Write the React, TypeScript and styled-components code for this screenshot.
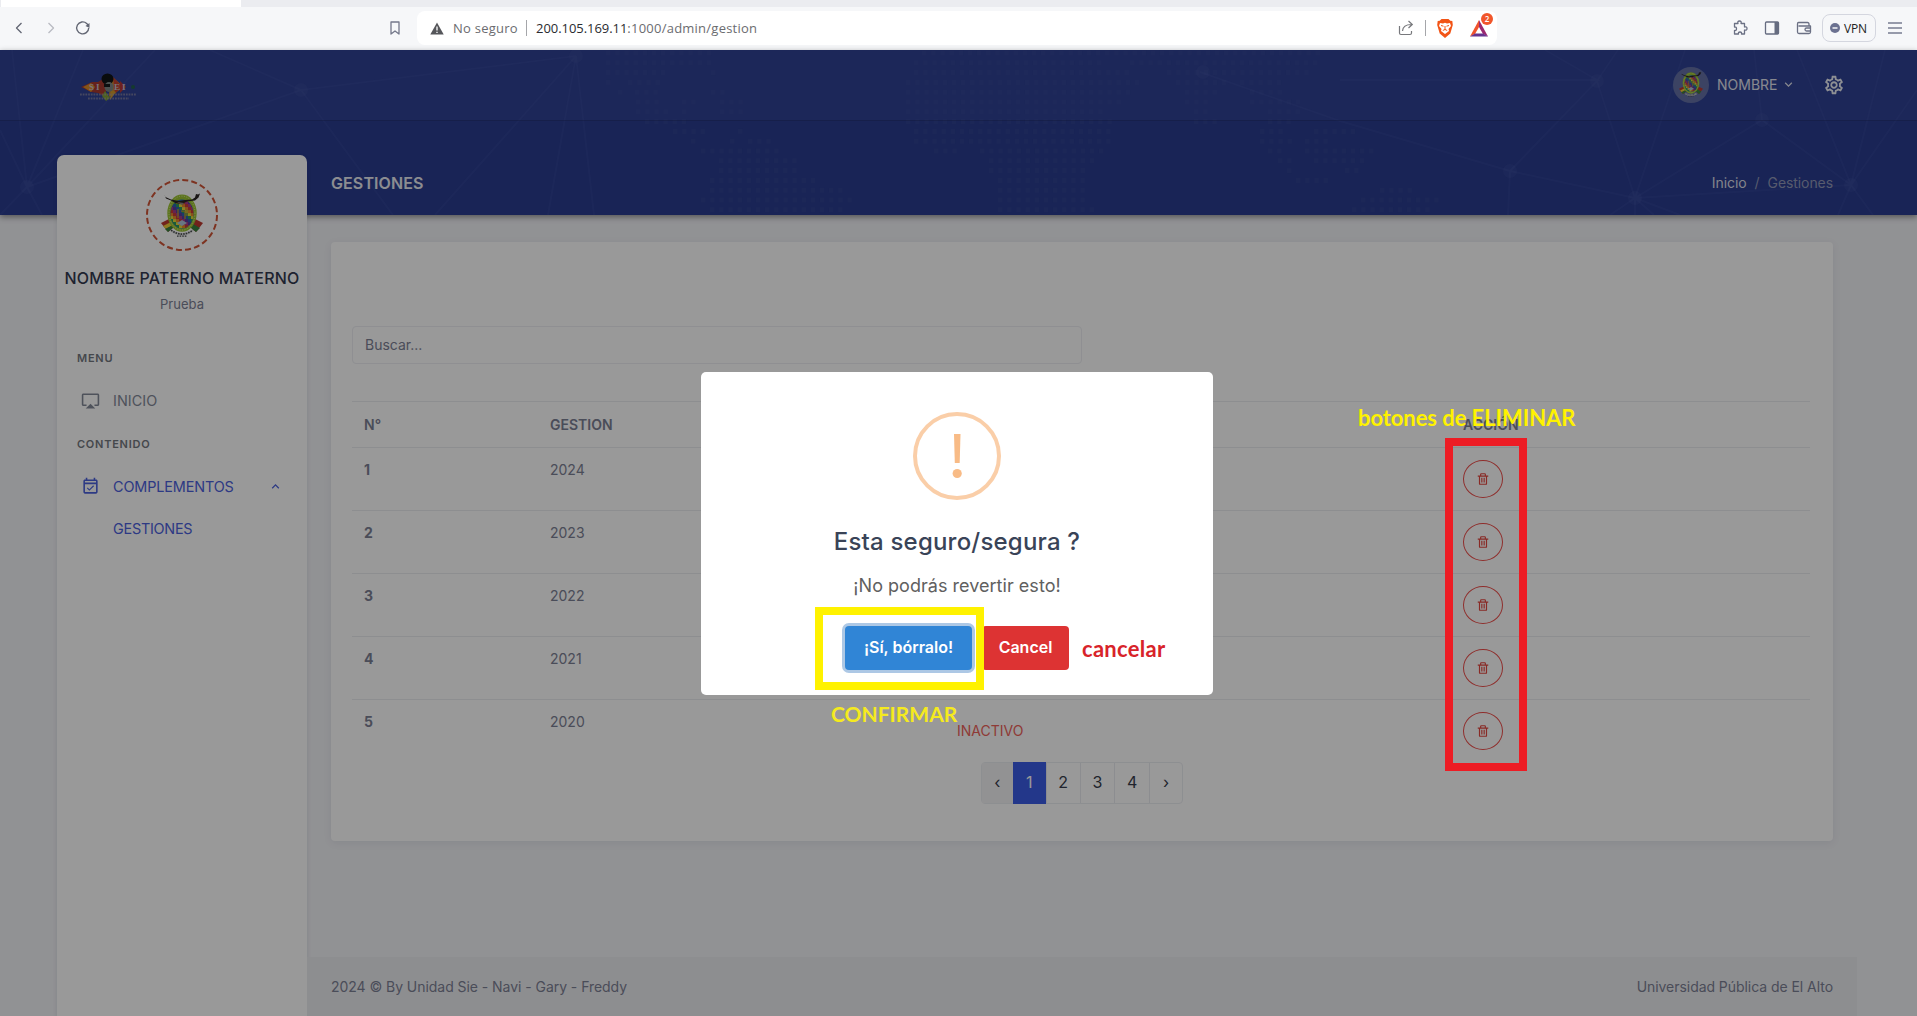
import React from 'react';
import styled, { createGlobalStyle } from 'styled-components';
import { MdOutlineAirplay, MdOutlineEventAvailable, MdOutlineSettings, MdKeyboardArrowDown, MdKeyboardArrowUp } from 'react-icons/md';
import { BiTrash } from 'react-icons/bi';

const GlobalStyle = createGlobalStyle`
  * { box-sizing: border-box; }
  body { margin: 0; overflow: hidden; font-family: Inter, "Liberation Sans", sans-serif; font-size: 14px; color: #7c8094; }
`;

/* ---------- browser chrome ---------- */
const Screen = styled.div`width: 1917px; height: 1016px; position: relative; overflow: hidden;`;
const TabStrip = styled.div`height: 7px; background: #ebecf0; padding-left: 1px;`;
const ActiveTab = styled.div`width: 240px; height: 7px; background: #fff;`;
const Toolbar = styled.div`
  height: 43px; background: #f6f7f9; display: flex; align-items: center; padding-left: 11px;
  padding-bottom: 1px; font-family: "Open Sans", "Noto Sans", sans-serif;
  svg { display: block; flex: none; }
`;
const NavIcons = styled.div`display: flex; flex: none; gap: 16px; width: 376px;`;
const Address = styled.div`
  flex: none; width: 1080px; height: 34px; margin-left: 14px; background: #fff; border-radius: 8px;
  padding: 0 9px 0 13px; display: flex; align-items: center; font-size: 13px; color: #6b6c70; white-space: nowrap;
`;
const Host = styled.span`color: #2a2b2f; letter-spacing: -0.05px;`;
const Path = styled.span`letter-spacing: 0.24px; flex: 1;`;
const Insecure = styled.span`margin-left: 9px; width: 73px; letter-spacing: 0.25px;`;
const Rule = styled.i<{ $gap: number }>`width: 1px; height: 16px; background: #a5a6aa; margin-right: ${p => p.$gap}px;`;
const Tools = styled.div`flex: none; margin-left: 235px; display: flex; align-items: center; gap: 16px;`;
const Vpn = styled.div`
  width: 54px; height: 28px; margin: 0 -5px 0 -6px; border: 1px solid #d4d6df; border-radius: 8px; display: flex; align-items: center;
  gap: 4px; padding-left: 7px; font-size: 12px; letter-spacing: -0.2px; color: #222;
`;
const ShareGap = styled.span`margin-right: 11px;`;
const Rewards = styled.div`position: relative; margin-left: 17px;`;
const Count = styled.b`
  position: absolute; left: 11px; top: -7px; width: 12px; height: 12px; border-radius: 50%; background: #f1562b; color: #fff;
  font-size: 8px; line-height: 12px; text-align: center; font-weight: 600;
`;

/* ---------- page ---------- */
const Page = styled.div`height: 966px; position: relative; background: #f2f3f7;`;
const Backdrop = styled.div`
  position: absolute; left: 0; top: 0; width: 100%; height: 165px; background: #2a3c8f; box-shadow: 0 2px 6px rgba(0,0,0,.42);
  svg { display: block; }
`;
const TopBar = styled.header`
  position: relative; height: 71px; padding: 0 72px 1px 80px; display: flex; align-items: center;
  background: rgba(70,88,170,.18); border-bottom: 1px solid rgba(20,30,80,.35);
`;
const LogoBox = styled.div`flex: 1; padding-top: 9px;`;
const User = styled.div`display: flex; align-items: center; color: #e1e3ee; font-size: 14px;`;
const UserPhoto = styled.div`
  width: 36px; height: 36px; border-radius: 50%; background: #6471a6; display: flex; align-items: center; justify-content: center; margin-right: 8px;
`;
const UserName = styled.span`width: 64px; padding-bottom: 1px;`;
const Gear = styled(MdOutlineSettings)`margin-left: 27px; color: #eceef6;`;
const Layout = styled.div`position: relative; height: 895px; display: flex; padding: 0 60px 0 57px;`;
const Sidebar = styled.aside`
  width: 250px; margin-top: 34px; background: #fff; border-radius: 7px 7px 0 0; box-shadow: 0 2px 5px rgba(15,34,58,.1);
  display: flex; flex-direction: column;
`;
const Profile = styled.div`display: flex; flex-direction: column; align-items: center; padding-top: 23px; height: 186px; white-space: nowrap;`;
const FullName = styled.h5`margin: 16px 0 0; font-size: 16px; line-height: 20px; font-weight: 450; color: #343a50; letter-spacing: 0.16px;`;
const Role = styled.p`margin: 8px 0 0; font-size: 13px; line-height: 16px; letter-spacing: .05px;`;
const MenuTitle = styled.div`height: 34px; padding: 11px 20px 0; font-size: 11px; line-height: 12px; font-weight: 600; letter-spacing: .75px; color: #74787f;`;
const MenuItem = styled.a<{ $active?: boolean }>`
  height: 52px; padding: 0 24px 1px 24px; display: flex; align-items: center; color: ${p => (p.$active ? '#4c61dc' : '#838998')};
  font-size: 14.4px; letter-spacing: ${p => (p.$active ? '-.12px' : '0.05px')};
  svg { flex: none; }
`;
const MenuText = styled.span`margin-left: 13px; flex: 1;`;
const SubItem = styled.a`height: 30px; padding-left: 56px; line-height: 31px; font-size: 14.4px; letter-spacing: -.24px; color: #4c61dc;`;
const Main = styled.main`flex: 1; display: flex; flex-direction: column;`;
const TitleRow = styled.div`height: 94px; padding: 29px 24px 0; display: flex; align-items: center; justify-content: space-between;`;
const Title = styled.h4`margin: 0; font-size: 16px; font-weight: 600; color: #e9ebf2; letter-spacing: .1px;`;
const Crumbs = styled.div`display: flex; gap: 8px; font-size: 14px; letter-spacing: -.08px; color: #9198b8; span:first-child { color: #dadce7; }`;
const Card = styled.section`
  margin: 27px 24px 0; height: 599px; background: #fff; border-radius: 4px; padding: 84px 21px 0; box-shadow: 0 2px 8px rgba(15,34,58,.07);
`;
const Search = styled.div`
  width: 730px; height: 38px; border: 1px solid #eeeff3; border-radius: 4px; padding-left: 12px; line-height: 36px; font-size: 14px;
`;
const Table = styled.table`width: 1458px; margin-top: 37px; table-layout: fixed; border-collapse: separate; border-spacing: 0;`;
const Th = styled.th`border-top: 1px solid #ecedf1; height: 46px; padding: 0 12px 1px; text-align: left; font-size: 14px; font-weight: 600; line-height: 21px;`;
const Td = styled.td<{ $strong?: boolean }>`
  border-top: 1px solid #ecedf1; height: 63px; padding: 11px 12px; vertical-align: top; line-height: 21px; font-size: 14px;
  font-weight: ${p => (p.$strong ? 700 : 400)};
`;
const Status = styled.span`display: block; padding: 10px 0 0; color: #ee625a; font-size: 14px; line-height: 20px;`;
const Round = styled.button`
  width: 40px; height: 38px; margin-top: 1px; padding: 0 0 1px; border: 1px solid #ee4d4a; border-radius: 50%; background: none; color: #e4463f;
  display: flex; align-items: center; justify-content: center;
`;
const Pager = styled.nav`display: flex; width: 202px; height: 42px; margin: 0 auto; border: 1px solid #eceef2; border-radius: 4px;`;
const PageLink = styled.a<{ $active?: boolean; $muted?: boolean; $w: number }>`
  width: ${p => p.$w}px; margin: ${p => (p.$active ? '-1px 0' : '0')}; padding-bottom: 2px;
  border-left: ${p => (p.$active || p.$w < 33 ? 0 : 1)}px solid #e9ebf0;
  background: ${p => (p.$active ? '#3b5de7' : p.$muted ? '#f4f4f6' : 'transparent')};
  color: ${p => (p.$active ? '#fff' : '#383d4c')}; font-size: 16px; display: flex; align-items: center; justify-content: center;
`;
const Footer = styled.footer`
  margin-top: auto; height: 59px; padding: 0 24px; display: flex; align-items: center; justify-content: space-between;
  background: #ecedf1; font-size: 14px; letter-spacing: -.05px;
`;

/* ---------- modal ---------- */
const Shade = styled.div`
  position: absolute; left: 0; top: 50px; width: 1917px; height: 966px; background: rgba(0,0,0,.4);
  display: flex; justify-content: center; align-items: flex-start; padding: 322px 3px 0 0;
`;
const Dialog = styled.div`width: 512px; height: 323px; background: #fff; border-radius: 5px; display: flex; flex-direction: column; align-items: center; padding-top: 40px;`;
const DialogTitle = styled.h2`margin: 27px 0 0; font-size: 24px; line-height: 30px; font-weight: 450; color: #394357; letter-spacing: .2px;`;
const DialogText = styled.p`margin: 17px 0 0; font-size: 18px; line-height: 24px; color: #606060; letter-spacing: .03px;`;
const Actions = styled.div`display: flex; gap: 10px; margin: 28px 0 0;`;
const Action = styled.button<{ $color: string; $w: number; $focus?: boolean }>`
  width: ${p => p.$w}px; height: 44px; padding: 0 0 2px; border: 0; border-radius: 4px; background: ${p => p.$color}; color: #fff;
  font: 600 16px Inter, sans-serif; letter-spacing: 0; box-shadow: ${p => (p.$focus ? '0 0 0 3px #adc8e5' : 'none')};
`;

/* ---------- annotations drawn over the screen ---------- */
const Frame = styled.div<{ $x: number; $y: number; $w: number; $h: number; $c: string }>`
  position: absolute; left: ${p => p.$x}px; top: ${p => p.$y}px; width: ${p => p.$w}px; height: ${p => p.$h}px; border: 8px solid ${p => p.$c};
`;
const Note = styled.div<{ $x: number; $y: number; $c: string; $size: number; $ls?: number }>`
  position: absolute; left: ${p => p.$x}px; top: ${p => p.$y}px; color: ${p => p.$c}; font: 700 ${p => p.$size}px/28px Lato, sans-serif;
  letter-spacing: ${p => p.$ls || 0}px; white-space: nowrap;
`;

function Crest({ size }: { size: number }) {
  const colors = ['#2f5fb0', '#2a9a5a', '#e6d83a', '#e9862c', '#cc3b34', '#a93a86', '#5b3d9a'];
  const cells: React.ReactElement[] = [];
  for (let r = 0; r < 9; r++) for (let c = 0; c < 8; c++)
    cells.push(<rect key={`${r}-${c}`} x={9 + c * 3} y={9 + r * 3} width="3.1" height="3.1" fill={colors[(c + 14 - r) % 7]} />);
  return (
    <svg width={size} height={size * 1.1} viewBox="0 0 42 46">
      <path d="M0 31l8-4 5 8-6 5z" fill="#bd3930" /><path d="M2 34l8-4 2 3-7 4z" fill="#eecd37" /><path d="M4 37l8-4 1 2-6 5z" fill="#37833e" />
      <path d="M42 31l-8-4-5 8 6 5z" fill="#bd3930" /><path d="M39 36l-7-4-3 3 6 5z" fill="#37833e" />
      <ellipse cx="21" cy="21" rx="14.700" ry="18.700" fill="#9cc432" />
      <ellipse cx="21" cy="21" rx="13" ry="17" fill="none" stroke="#dbe8a0" strokeDasharray="1 1.500" />
      <clipPath id={`crest${size}`}><ellipse cx="21" cy="22" rx="11.500" ry="14.500" /></clipPath>
      <g clipPath={`url(#crest${size})`}><rect x="8" y="6" width="26" height="32" fill="#286eb3" />{cells}
        <path d="M17 17v9M20 19h4v8M26 17v7" stroke="#b99a32" fill="none" strokeWidth="1.300" /><path d="M16 31l5-3 5 3-5 3z" fill="#aec7dc" /></g>
      <path d="M3 2l1.500 3 5.500 2.500 8 1.500 6-1 7-.5 3-2 1-3.500 2 .5 2-1-1.500 4-3.500 3-8 1-5 2.500-6-.5-5-3-5-2z" fill="#2b2624" />
      <path d="M16 10l7 1-2 2z" fill="#8d8580" />
      <path d="M11 39q10 7 20 0" fill="none" stroke="#e8e8e8" strokeWidth="2.500" /><path d="M10 38q11 8 22 0" fill="none" stroke="#45484c" strokeWidth="1.600" strokeDasharray="1.600 1" />
      <path d="M16 44h10" stroke="#45484c" strokeWidth="1.300" strokeDasharray="1.600 1" />
    </svg>
  );
}

function BannerArt() {
  const nodes = [[27, 137], [301, 40], [576, 6], [993, 22], [1597, 31], [1510, 121], [1635, 148], [1762, 70], [1851, 135]];
  const lines = ['M27 137L12 0M27 137L83 0M27 137L301 40L576 6M301 40L210 0M27 137L155 0M301 40L393 165M576 6L435 165M576 6L548 165M576 6L594 165M27 137L0 80M27 137L0 165M27 137L42 165',
    'M1200 22L1340 71L1510 121L1635 148L1851 135M1340 30H1597L1545 0M1597 31L1510 121L1508 165M1597 31L1635 148L1762 70L1851 135M1635 148L1685 0M1762 70L1754 0M1851 135L1797 0M1851 135L1885 0M1851 135L1838 165M1851 135L1873 165M1635 148L1610 165M1635 148V165M1635 148L1654 165M1635 148L1680 165M1851 135L1917 40M1597 31L1618 0'];
  // each run is [row, first x, dot count]
  const runs = [[0, 606, 12], [1, 606, 12], [2, 606, 7], [2, 711, 1], [3, 606, 1], [3, 628, 4], [4, 618, 1], [4, 635, 3], [4, 711, 2], [5, 636, 3], [5, 682, 2], [5, 720, 3], [6, 636, 4], [6, 682, 1], [6, 720, 3], [7, 645, 5], [8, 673, 4], [8, 738, 1], [9, 691, 1], [9, 730, 1], [9, 748, 3], [10, 701, 9], [11, 719, 9], [12, 719, 9], [13, 710, 12], [14, 710, 15], [15, 701, 17], [16, 710, 15],
    [0, 922, 44], [1, 914, 21], [1, 1130, 21], [2, 914, 24], [2, 1167, 16], [3, 906, 26], [3, 1176, 6], [3, 1240, 5], [4, 906, 25], [4, 1185, 4], [4, 1250, 4], [5, 906, 24], [5, 1185, 3], [5, 1250, 6], [6, 906, 22], [6, 1194, 2], [6, 1268, 4], [7, 906, 23], [7, 1194, 3], [7, 1268, 3], [8, 914, 22], [8, 1260, 3], [8, 1314, 5], [9, 914, 22], [9, 1260, 4], [9, 1305, 3], [10, 934, 3], [10, 980, 14], [10, 1268, 2], [10, 1305, 8], [11, 989, 12], [11, 1278, 2], [11, 1314, 6], [12, 989, 11], [12, 1287, 1], [12, 1345, 2], [13, 998, 10], [13, 1296, 4], [14, 998, 10], [14, 1380, 4], [15, 998, 10], [15, 1361, 9], [16, 998, 11], [16, 1352, 9]];
  return (
    <svg width="1917" height="165" viewBox="0 0 1917 165">
      {lines.map(d => <path key={d} d={d} stroke="#7286cf" strokeOpacity=".09" strokeWidth="2" fill="none" />)}
      {nodes.map(([x, y]) => <circle key={x} cx={x === 993 ? 1203 : x} cy={y} r="7" fill="#6377bd" fillOpacity=".12" />)}
      {runs.map(([r, x, n], i) => <path key={i} d={`M${x} ${3 + r * 9.8}h${n * 9.15 - 4}`} stroke="#6d80bd" strokeOpacity=".085" strokeWidth="5" strokeDasharray="4.500 4.650" />)}
    </svg>
  );
}

function Logo() {
  return (
    <svg width="57" height="29" viewBox="0 0 57 29">
      <path d="M1 14l11-5 6 0 8-5v20l-8-4-7-1z" fill="#a8392f" />
      <path d="M3 14l8-4 4 4-4 5z" fill="#dc8c28" /><path d="M30 2l14 12-15 10z" fill="#c98a30" /><path d="M33 4l9 9-7 8z" fill="#c3402e" /><path d="M40 8l6 6-6 6z" fill="#b63836" /><path d="M25 18l5 7-4 3-4-5z" fill="#7fa032" /><path d="M31 17l5 2-6 8z" fill="#d39b2c" />
      <circle cx="53" cy="14" r="2" fill="#23624c" />
      <ellipse cx="27.500" cy="6" rx="6" ry="5.500" fill="#101416" /><ellipse cx="29" cy="14" rx="4.500" ry="5" fill="#7e8886" /><path d="M24 11h6v3h-6z" fill="#15191b" />
      <text x="9" y="17" fontFamily="Liberation Serif" fontSize="9" fontWeight="700" letterSpacing="2" fill="#c8bfcc">SI</text><text x="34" y="17" fontFamily="Liberation Serif" fontSize="9" fontWeight="700" letterSpacing="2" fill="#c8bfcc">EI</text>
      <path d="M0 21.500h56M8 25.500h41" stroke="#a39ba8" strokeWidth="2" strokeDasharray="1.800 .9" opacity=".6" />
    </svg>
  );
}

const Line = ({ d, w = 16, c = '#626673', s = 1.3 }: { d: string; w?: number; c?: string; s?: number }) => (
  <svg width={w} height="16" viewBox={`0 0 ${w} 16`} fill="none" stroke={c} strokeWidth={s} strokeLinejoin="round"><path d={d} /></svg>
);

const rows = [
  { year: 2024 }, { year: 2023 }, { year: 2022 }, { year: 2021 }, { year: 2020, status: 'INACTIVO' },
];

export default function App() {
  return (
    <Screen>
      <GlobalStyle />
      <TabStrip><ActiveTab /></TabStrip>
      <Toolbar>
        <NavIcons>
          <Line d="M10.500 3L5.500 8l5 5" /><Line d="M5.500 3l5 5-5 5" c="#b9bbc2" />
          <svg width="16" height="16" viewBox="0 0 16 16" fill="none" stroke="#626673" strokeWidth="1.400"><path d="M13.700 8a6 6 0 1 1-2-4.600L13.700 6" /><path d="M14.500 3v5l-4-2z" fill="#626673" stroke="none" /></svg>
        </NavIcons>
        <Line d="M4 2h8v12l-4-3-4 3z" c="#74788a" />
        <Address>
          <svg width="14" height="13" viewBox="0 0 14 13"><path d="M7 .5L13.700 12.500H.3z" fill="#55565a" /><path d="M7 4.500v4M7 9.700v1.300" stroke="#fff" strokeWidth="1.300" /></svg>
          <Insecure>No seguro</Insecure><Rule $gap={9} />
          <Host>200.105.169.11</Host><Path>:1000/admin/gestion</Path>
          <ShareGap><svg width="16" height="16" viewBox="0 0 16 16" fill="none" stroke="#77787c" strokeWidth="1.200"><path d="M1.500 6v7q0 1.500 1.500 1.500h9q1.500 0 1.500-1.500v-2M4.500 11q.5-6.500 9-6.500M10.500 1l3.800 3.500-3.800 3.500" /></svg></ShareGap>
          <Rule $gap={11} />
          <svg width="16" height="19" viewBox="0 0 16 19"><path d="M4.500 0h7l1.800 1.800 2 .2.500 4-2.500 8.500L8 19l-5.300-4.500L.2 6l.5-4 2-.2z" fill="#f25416" /><path d="M3 4l3 .5 2-.7 2 .7 3-.5 1 3-2.500 3 .5 2L8 15l-4-3 .5-2L2 7z" fill="#fff" /><path d="M4 6.500l2.500.7M12 6.500l-2.500.7M8 7v4M5.800 11.500L8 10.500l2.200 1" stroke="#f25416" strokeWidth="1" fill="none" /></svg>
          <Rewards><svg width="18" height="17" viewBox="0 0 18 17"><path d="M9 0L0 16.500l5-2.500 4-7z" fill="#f0532d" /><path d="M9 0l9 16.500-5-2.500-4-7z" fill="#9b2870" /><path d="M0 16.500h18L13 13.500H5z" fill="#65348f" /></svg><Count>2</Count></Rewards>
        </Address>
        <Tools>
          <Line c="#6b7084" d="M2.500 3.500h3.500q-.8-2.500 1.500-2.500t1.500 2.500h3.500v3.500q2.500-.8 2.500 1.500t-2.500 1.500V14H9.500q.5-2-1.500-2t-1.500 2H2.500v-3.500q2 .3 2-1.700t-2-1.800z" />
          <svg width="16" height="16" viewBox="0 0 16 16"><rect x="1.500" y="2" width="13" height="12" rx="1" fill="none" stroke="#666c80" strokeWidth="1.300" /><path d="M10.500 2h4v12h-4z" fill="#666c80" /></svg>
          <Line c="#6b7084" d="M13 6V4q0-1.500-1.500-1.500h-9Q1.500 2.500 1.500 4v8q0 1.500 1.500 1.500h10q1.500 0 1.500-1.500V6H2.500M14.500 8h-4q-1.500 0-1.500 1.500T10.500 11h4" />
          <Vpn><svg width="10" height="10" viewBox="0 0 10 10"><circle cx="5" cy="5" r="5" fill="#6b7190" /><path d="M2.500 5h5" stroke="#fff" strokeWidth="1.400" /></svg>VPN</Vpn>
          <Line c="#777c90" d="M1 3h14M1 8h14M1 13h14" />
        </Tools>
      </Toolbar>

      <Page>
        <Backdrop><BannerArt /></Backdrop>
        <TopBar>
          <LogoBox><Logo /></LogoBox>
          <User>
            <UserPhoto><Crest size={24} /></UserPhoto><UserName>NOMBRE</UserName><MdKeyboardArrowDown size={15} />
          </User>
          <Gear size={22} />
        </TopBar>
        <Layout>
          <Sidebar>
            <Profile>
              <svg width="74" height="74" viewBox="0 0 74 74"><circle cx="37" cy="37" r="35" fill="none" stroke="#d15638" strokeWidth="2" strokeDasharray="6 3.163" /><g transform="translate(16 14)"><Crest size={42} /></g></svg>
              <FullName>NOMBRE PATERNO MATERNO</FullName>
              <Role>Prueba</Role>
            </Profile>
            <MenuTitle>MENU</MenuTitle>
            <MenuItem><MdOutlineAirplay size={19} /><MenuText>INICIO</MenuText></MenuItem>
            <MenuTitle>CONTENIDO</MenuTitle>
            <MenuItem $active><MdOutlineEventAvailable size={19} /><MenuText>COMPLEMENTOS</MenuText><MdKeyboardArrowUp size={15} /></MenuItem>
            <SubItem>GESTIONES</SubItem>
          </Sidebar>
          <Main>
            <TitleRow><Title>GESTIONES</Title><Crumbs><span>Inicio</span><span>/</span><span>Gestiones</span></Crumbs></TitleRow>
            <Card>
              <Search>Buscar...</Search>
              <Table>
                <colgroup><col style={{ width: 186 }} /><col style={{ width: 407 }} /><col style={{ width: 506 }} /><col /></colgroup>
                <thead><tr><Th>N°</Th><Th>GESTION</Th><Th /><Th>ACCIÓN</Th></tr></thead>
                <tbody>
                  {rows.map((row, i) => (
                    <tr key={row.year}><Td $strong>{i + 1}</Td><Td>{row.year}</Td><Td>{row.status && <Status>{row.status}</Status>}</Td><Td><Round><BiTrash size={14} /></Round></Td></tr>
                  ))}
                </tbody>
              </Table>
              <Pager>
                <PageLink $w={31} $muted>‹</PageLink><PageLink $w={33} $active>1</PageLink><PageLink $w={34}>2</PageLink>
                <PageLink $w={35}>3</PageLink><PageLink $w={35}>4</PageLink><PageLink $w={33}>›</PageLink>
              </Pager>
            </Card>
            <Footer><span>2024 © By Unidad Sie - Navi - Gary - Freddy</span><span>Universidad Pública de El Alto</span></Footer>
          </Main>
        </Layout>
      </Page>

      <Shade>
        <Dialog>
          <svg width="88" height="88" viewBox="0 0 88 88"><circle cx="44" cy="44" r="42" fill="none" stroke="#facea8" strokeWidth="4" /><path d="M41 22h6.500l-.8 29h-4.900z" fill="#f8bb86" /><circle cx="44.200" cy="61.500" r="4.600" fill="#f8bb86" /></svg>
          <DialogTitle>Esta seguro/segura ?</DialogTitle>
          <DialogText>¡No podrás revertir esto!</DialogText>
          <Actions><Action $color="#3085d6" $w={127} $focus>¡Sí, bórralo!</Action><Action $color="#dd3333" $w={87}>Cancel</Action></Actions>
        </Dialog>
      </Shade>

      <Frame $x={815} $y={607} $w={169} $h={83} $c="#fff200" />
      <Frame $x={1445} $y={438} $w={82} $h={333} $c="#ed1c24" />
      <Note $x={1358} $y={404} $c="#fff200" $size={22} $ls={-0.07}>botones de ELIMINAR</Note>
      <Note $x={831} $y={700} $c="#f5ea1e" $size={21}>CONFIRMAR</Note>
      <Note $x={1082} $y={635} $c="#d8232a" $size={22} $ls={0.3}>cancelar</Note>
    </Screen>
  );
}
